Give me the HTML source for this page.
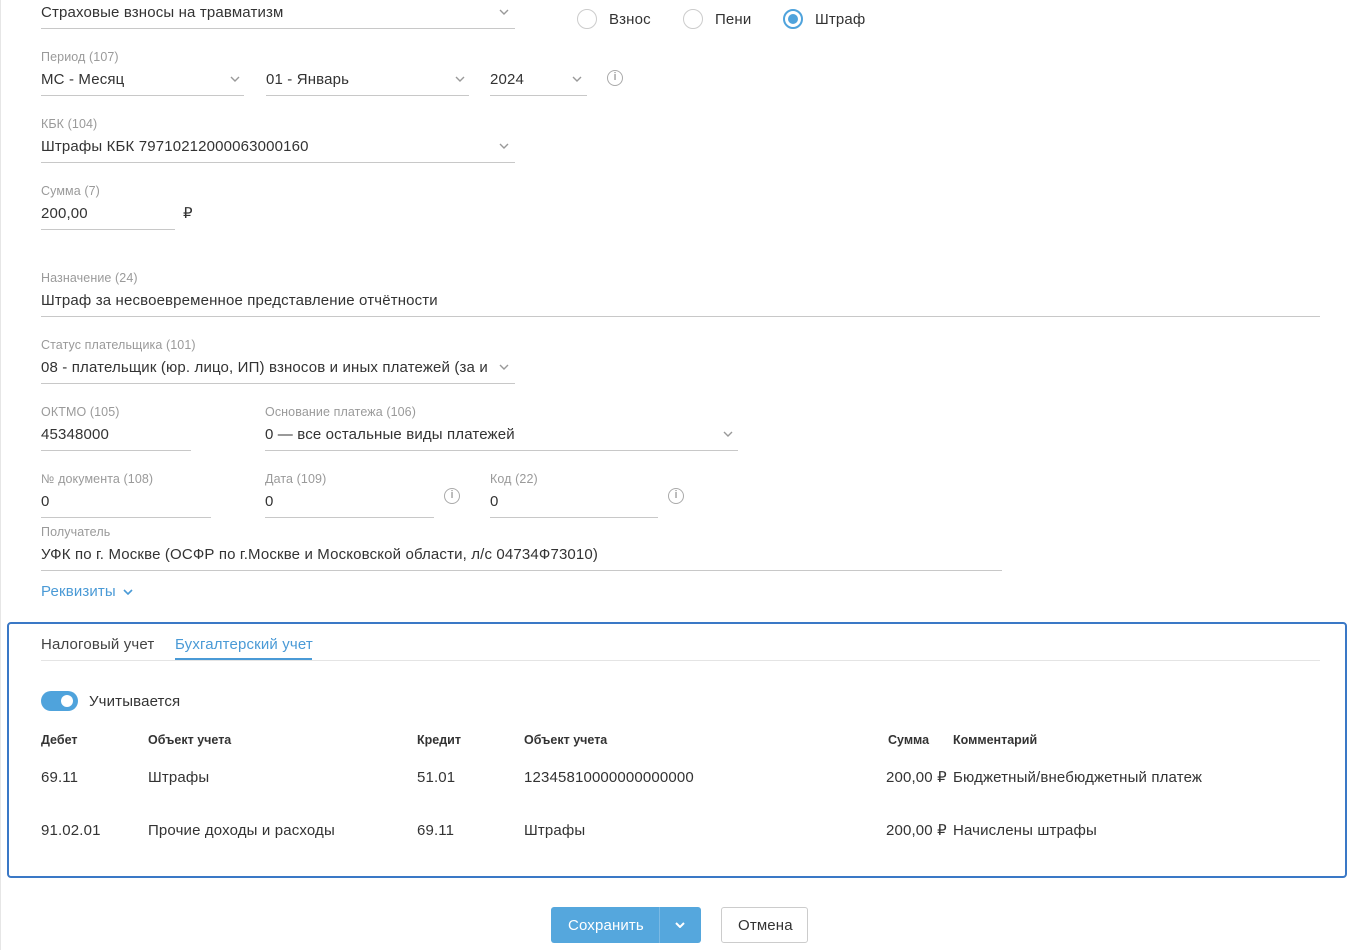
<!DOCTYPE html>
<html><head><meta charset="utf-8"><style>
*{margin:0;padding:0;box-sizing:border-box}
body{width:1355px;height:950px;background:#fff;font-family:"Liberation Sans",sans-serif;color:#333;position:relative;overflow:hidden}
.l{position:absolute;left:0;top:0;width:1px;height:950px;background:#e6e6e6}
.t{position:absolute;white-space:nowrap;font-size:15px;letter-spacing:0.15px;line-height:18px;margin-top:1px}
.lb{position:absolute;white-space:nowrap;font-size:12.5px;line-height:16px;color:#9a9a9a;letter-spacing:0.1px}
.u{position:absolute;height:1px;background:#c8c8c8}
.ch{position:absolute;width:10px;height:6px}
.b{font-weight:bold;font-size:12.5px;letter-spacing:0}
.ic{position:absolute;width:16px;height:16px;border:1.5px solid #aaa;border-radius:50%;color:#aaa;font-size:11px;line-height:13px;text-align:center;font-weight:bold}
.rad{position:absolute;width:20px;height:20px;border:1px solid #ccc;border-radius:50%}
</style></head><body>
<div class="l"></div>
<svg width="0" height="0" style="position:absolute"><defs><symbol id="c" viewBox="0 0 10 6"><path d="M1 1 L5 5 L9 1" fill="none" stroke="#999" stroke-width="1.4"/></symbol></defs></svg>

<div class="t" style="left:41px;top:3px">Страховые взносы на травматизм</div>
<svg class="ch" style="left:499px;top:9px"><use href="#c"/></svg>
<div class="u" style="left:41px;top:28px;width:474px"></div>

<div class="rad" style="left:577px;top:9px"></div><div class="t" style="left:609px;top:10px">Взнос</div>
<div class="rad" style="left:683px;top:9px"></div><div class="t" style="left:715px;top:10px">Пени</div>
<div class="rad" style="left:783px;top:9px;border:2px solid #4fa3dc"><div style="position:absolute;left:3px;top:3px;width:10px;height:10px;border-radius:50%;background:#4fa3dc"></div></div><div class="t" style="left:815px;top:10px">Штраф</div>

<div class="lb" style="left:41px;top:49px">Период (107)</div>
<div class="t" style="left:41px;top:70px">МС - Месяц</div><svg class="ch" style="left:230px;top:76px"><use href="#c"/></svg><div class="u" style="left:41px;top:95px;width:203px"></div>
<div class="t" style="left:266px;top:70px">01 - Январь</div><svg class="ch" style="left:455px;top:76px"><use href="#c"/></svg><div class="u" style="left:266px;top:95px;width:203px"></div>
<div class="t" style="left:490px;top:70px">2024</div><svg class="ch" style="left:572px;top:76px"><use href="#c"/></svg><div class="u" style="left:490px;top:95px;width:97px"></div>
<div class="ic" style="left:607px;top:70px">i</div>

<div class="lb" style="left:41px;top:116px">КБК (104)</div>
<div class="t" style="left:41px;top:137px">Штрафы КБК 79710212000063000160</div><svg class="ch" style="left:499px;top:143px"><use href="#c"/></svg><div class="u" style="left:41px;top:162px;width:474px"></div>

<div class="lb" style="left:41px;top:183px">Сумма (7)</div>
<div class="t" style="left:41px;top:204px">200,00</div><div class="t" style="left:183px;top:204px">₽</div><div class="u" style="left:41px;top:229px;width:134px"></div>

<div class="lb" style="left:41px;top:270px">Назначение (24)</div>
<div class="t" style="left:41px;top:291px">Штраф за несвоевременное представление отчётности</div><div class="u" style="left:41px;top:316px;width:1279px"></div>

<div class="lb" style="left:41px;top:337px">Статус плательщика (101)</div>
<div class="t" style="left:41px;top:358px;width:447px;overflow:hidden">08 - плательщик (юр. лицо, ИП) взносов и иных платежей (за исключением)</div><svg class="ch" style="left:499px;top:364px"><use href="#c"/></svg><div class="u" style="left:41px;top:383px;width:474px"></div>

<div class="lb" style="left:41px;top:404px">ОКТМО (105)</div>
<div class="t" style="left:41px;top:425px">45348000</div><div class="u" style="left:41px;top:450px;width:150px"></div>
<div class="lb" style="left:265px;top:404px">Основание платежа (106)</div>
<div class="t" style="left:265px;top:425px">0 — все остальные виды платежей</div><svg class="ch" style="left:723px;top:431px"><use href="#c"/></svg><div class="u" style="left:265px;top:450px;width:473px"></div>

<div class="lb" style="left:41px;top:471px">№ документа (108)</div>
<div class="t" style="left:41px;top:492px">0</div><div class="u" style="left:41px;top:517px;width:170px"></div>
<div class="lb" style="left:265px;top:471px">Дата (109)</div>
<div class="t" style="left:265px;top:492px">0</div><div class="u" style="left:265px;top:517px;width:169px"></div>
<div class="ic" style="left:444px;top:488px">i</div>
<div class="lb" style="left:490px;top:471px">Код (22)</div>
<div class="t" style="left:490px;top:492px">0</div><div class="u" style="left:490px;top:517px;width:168px"></div>
<div class="ic" style="left:668px;top:488px">i</div>

<div class="lb" style="left:41px;top:524px">Получатель</div>
<div class="t" style="left:41px;top:545px">УФК по г. Москве (ОСФР по г.Москве и Московской области, л/с 04734Ф73010)</div><div class="u" style="left:41px;top:570px;width:961px"></div>

<div class="t" style="left:41px;top:582px;color:#4a9ad6">Реквизиты</div>
<svg class="ch" style="left:123px;top:589px"><path d="M1 1 L5 5 L9 1" fill="none" stroke="#4a9ad6" stroke-width="1.6"/></svg>

<div style="position:absolute;left:7px;top:622px;width:1340px;height:256px;border:2px solid #3a78c6;border-radius:4px"></div>
<div class="t" style="left:41px;top:635px;color:#444">Налоговый учет</div>
<div class="t" style="left:175px;top:635px;color:#4a9ad6">Бухгалтерский учет</div>
<div class="u" style="left:41px;top:660px;width:1279px;background:#e4e4e4"></div>
<div style="position:absolute;left:175px;top:658px;width:137px;height:2px;background:#4a9ad6"></div>

<div style="position:absolute;left:41px;top:691px;width:37px;height:20px;border-radius:10px;background:#4fa3dc"><div style="position:absolute;left:20px;top:4px;width:12px;height:12px;border-radius:50%;background:#fff"></div></div>
<div class="t" style="left:89px;top:692px">Учитывается</div>

<div class="t b" style="left:41px;top:730px">Дебет</div>
<div class="t b" style="left:148px;top:730px">Объект учета</div>
<div class="t b" style="left:417px;top:730px">Кредит</div>
<div class="t b" style="left:524px;top:730px">Объект учета</div>
<div class="t b" style="left:888px;top:730px">Сумма</div>
<div class="t b" style="left:953px;top:730px">Комментарий</div>

<div class="t" style="left:41px;top:768px">69.11</div>
<div class="t" style="left:148px;top:768px">Штрафы</div>
<div class="t" style="left:417px;top:768px">51.01</div>
<div class="t" style="left:524px;top:768px">12345810000000000000</div>
<div class="t" style="left:886px;top:768px">200,00 ₽</div>
<div class="t" style="left:953px;top:768px">Бюджетный/внебюджетный платеж</div>

<div class="t" style="left:41px;top:821px">91.02.01</div>
<div class="t" style="left:148px;top:821px">Прочие доходы и расходы</div>
<div class="t" style="left:417px;top:821px">69.11</div>
<div class="t" style="left:524px;top:821px">Штрафы</div>
<div class="t" style="left:886px;top:821px">200,00 ₽</div>
<div class="t" style="left:953px;top:821px">Начислены штрафы</div>

<div style="position:absolute;left:551px;top:907px;width:150px;height:36px;background:#55a7dd;border-radius:3px"></div>
<div style="position:absolute;left:659px;top:907px;width:1px;height:36px;background:#7ab9e4"></div>
<div class="t" style="left:568px;top:916px;color:#fff">Сохранить</div>
<svg class="ch" style="left:675px;top:922px"><path d="M1 1 L5 5 L9 1" fill="none" stroke="#fff" stroke-width="2"/></svg>
<div style="position:absolute;left:721px;top:907px;width:87px;height:36px;border:1px solid #ccc;border-radius:3px"></div>
<div class="t" style="left:738px;top:916px">Отмена</div>
</body></html>
